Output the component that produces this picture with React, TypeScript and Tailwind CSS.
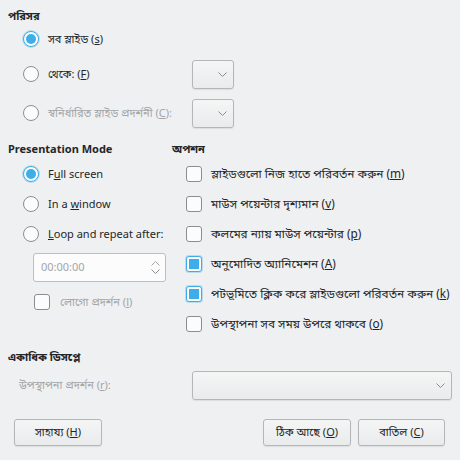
import React from "react";

const Chevron = ({ className = "" }: { className?: string }) => (
  <svg width="9" height="5" viewBox="0 0 9 5" className={className}>
    <path d="M0.5 0.5 L4.5 4.5 L8.5 0.5" fill="none" stroke="#8a8e91" strokeWidth="1" />
  </svg>
);

const Radio = ({ checked = false }: { checked?: boolean }) => (
  <div
    className={
      "w-[16px] h-[16px] rounded-full border flex items-center justify-center shrink-0 " +
      (checked ? "border-[#3daee9] bg-[#fcfcfc] shadow-[0_0_0_1px_rgba(61,174,233,0.3)]" : "border-[#8b8e91] bg-[#fcfcfc]")
    }
  >
    {checked && <div className="w-[10px] h-[10px] rounded-full bg-[#3daee9]" />}
  </div>
);

const Check = ({ checked = false }: { checked?: boolean }) => (
  <div
    className={
      "w-[16px] h-[16px] rounded-[3px] border flex items-center justify-center shrink-0 " +
      (checked ? "border-[#3daee9] bg-[#fcfcfc] shadow-[0_0_0_1px_rgba(61,174,233,0.3)]" : "border-[#8b8e91] bg-[#fcfcfc]")
    }
  >
    {checked && <div className="w-[10px] h-[10px] bg-[#3daee9]" />}
  </div>
);

const Drop = ({ className = "" }: { className?: string }) => (
  <div
    className={
      "h-[29px] rounded-[3px] border border-[#b4b7b9] bg-gradient-to-b from-[#f4f5f5] to-[#eaebec] shadow-[0_1px_1px_rgba(0,0,0,0.08)] flex items-center justify-end pr-[6px] " +
      className
    }
  >
    <Chevron />
  </div>
);

const Button = ({ children, className = "" }: { children: React.ReactNode; className?: string }) => (
  <div
    className={
      "h-[27px] rounded-[3px] border border-[#b4b7b9] bg-gradient-to-b from-[#f4f5f5] to-[#eaebec] shadow-[0_1px_1px_rgba(0,0,0,0.08)] flex items-center justify-center " +
      className
    }
  >
    {children}
  </div>
);

export default function App() {
  return (
    <div
      className="w-[460px] h-[460px] bg-[#eff0f1] text-[11px] text-[#232629] overflow-hidden"
      style={{ fontFamily: '"Noto Sans", "Noto Sans Bengali", sans-serif' }}
    >
      {/* Section 1 */}
      <div className="pt-[8px] pl-[8px] font-bold leading-[16px]">পরিসর</div>
      <div className="mt-[4px] h-[22px] flex items-center pl-[23px] gap-[9px]">
        <Radio checked />
        <span>
          সব স্লাইড (<u>s</u>)
        </span>
      </div>
      <div className="mt-[9px] h-[30px] flex items-center">
        <div className="w-[192px] flex items-center pl-[23px] gap-[9px]">
          <Radio />
          <span>
            থেকে: (<u>F</u>)
          </span>
        </div>
        <Drop className="w-[42px]" />
      </div>
      <div className="mt-[9px] h-[30px] flex items-center">
        <div className="w-[192px] flex items-center pl-[23px] gap-[9px]">
          <Radio />
          <span className="text-[#a3a5a7]">
            স্বনির্ধারিত স্লাইড প্রদর্শনী (<u>C</u>):
          </span>
        </div>
        <Drop className="w-[42px]" />
      </div>

      {/* Section 2 */}
      <div className="mt-[13px] flex">
        <div className="w-[172px] pl-[8px]">
          <div className="font-bold leading-[16px]">Presentation Mode</div>
          <div className="mt-[2px] h-[30px] flex items-center pl-[15px] gap-[9px]">
            <Radio checked />
            <span>
              F<u>u</u>ll screen
            </span>
          </div>
          <div className="h-[30px] flex items-center pl-[15px] gap-[9px]">
            <Radio />
            <span>
              In a <u>w</u>indow
            </span>
          </div>
          <div className="h-[30px] flex items-center pl-[15px] gap-[9px]">
            <Radio />
            <span>
              <u>L</u>oop and repeat after:
            </span>
          </div>
          <div className="mt-[4px] ml-[25px] w-[133px] h-[29px] rounded-[3px] border border-[#bcbec0] bg-[#fcfcfc] flex items-center justify-between pl-[7px] pr-[5px]">
            <span className="text-[#a3a5a7]">00:00:00</span>
            <div className="flex flex-col gap-[3px]">
              <svg width="9" height="5" viewBox="0 0 9 5">
                <path d="M0.5 4.5 L4.5 0.5 L8.5 4.5" fill="none" stroke="#a3a5a7" strokeWidth="1" />
              </svg>
              <Chevron />
            </div>
          </div>
          <div className="mt-[10px] h-[20px] flex items-center pl-[26px] gap-[10px]">
            <Check />
            <span className="text-[#a3a5a7]">
              লোগো প্রদর্শন (<u>l</u>)
            </span>
          </div>
        </div>
        <div className="flex-1">
          <div className="font-bold leading-[16px]">অপশন</div>
          <div className="mt-[2px] pl-[14px] text-[11.8px]">
            {[
              [false, "স্লাইডগুলো নিজ হাতে পরিবর্তন করুন (", "m", ")"],
              [false, "মাউস পয়েন্টার দৃশ্যমান (", "v", ")"],
              [false, "কলমের ন্যায় মাউস পয়েন্টার (", "p", ")"],
              [true, "অনুমোদিত অ্যানিমেশন (", "A", ")"],
              [true, "পটভূমিতে ক্লিক করে স্লাইডগুলো পরিবর্তন করুন (", "k", ")"],
              [false, "উপস্থাপনা সব সময় উপরে থাকবে (", "o", ")"],
            ].map(([c, a, u, b], i) => (
              <div key={i} className="h-[30px] flex items-center gap-[9px]">
                <Check checked={c as boolean} />
                <span>
                  {a as string}
                  <u>{u as string}</u>
                  {b as string}
                </span>
              </div>
            ))}
          </div>
        </div>
      </div>

      {/* Section 3 */}
      <div className="mt-[10px] pl-[8px] font-bold leading-[16px]">একাধিক ডিসপ্লে</div>
      <div className="mt-[6px] h-[29px] flex items-center">
        <div className="w-[192px] pl-[19px] text-[#a3a5a7]">
          উপস্থাপনা প্রদর্শন (<u>r</u>):
        </div>
        <Drop className="w-[260px]" />
      </div>

      <div className="mt-[19px] flex items-center pl-[14px] pr-[15px]">
        <Button className="w-[88px]">
          <span>
            সাহায্য (<u>H</u>)
          </span>
        </Button>
        <div className="flex-1" />
        <Button className="w-[88px]">
          <span>
            ঠিক আছে (<u>O</u>)
          </span>
        </Button>
        <Button className="w-[87px] ml-[7px]">
          <span>
            বাতিল (<u>C</u>)
          </span>
        </Button>
      </div>
    </div>
  );
}
